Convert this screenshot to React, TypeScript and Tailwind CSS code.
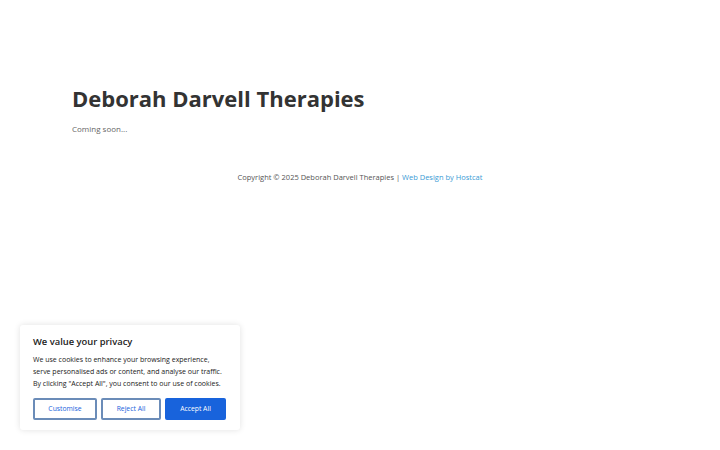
const FONT = "font-['Open_Sans',sans-serif]";

function CookieBanner() {
  return (
    <div className="absolute left-[20px] top-[325px] w-[220px] rounded-[3px] bg-white px-[13px] pb-[10px] pt-[10px] shadow-[0_0_6px_rgba(0,0,0,0.12)]">
      <p className="text-[9.4px] font-semibold leading-[14px] text-[#212121]">
        We value your privacy
      </p>
      <p className="mt-[5px] whitespace-nowrap text-[7px] leading-[12px] text-[#212121]">
        We use cookies to enhance your browsing experience,
        <br />
        serve personalised ads or content, and analyse our traffic.
        <br />
        By clicking "Accept All", you consent to our use of cookies.
      </p>
      <div className="mt-[8px] flex gap-[4px]">
        <button className="h-[22px] w-[64px] rounded-[2px] border-2 border-[#6b8cb8] text-[6.8px] text-[#1863dc]">
          Customise
        </button>
        <button className="h-[22px] w-[60px] rounded-[2px] border-2 border-[#6b8cb8] text-[6.8px] text-[#1863dc]">
          Reject All
        </button>
        <button className="h-[22px] w-[61px] rounded-[2px] border-2 border-[#1863dc] bg-[#1863dc] text-[6.8px] text-white">
          Accept All
        </button>
      </div>
    </div>
  );
}

export default function App() {
  return (
    <div className={`relative h-[450px] w-[720px] bg-white ${FONT}`}>
      <main className="px-[72px] pt-[82px]">
        <h1 className="text-[22px] font-bold leading-[32px] text-[#333333]">
          Deborah Darvell Therapies
        </h1>
        <p className="mt-[8px] text-[8px] leading-[14px] text-[#666666]">
          Coming soon...
        </p>
      </main>
      <footer className="mt-[34px] text-center text-[7.5px] leading-[14px] text-[#555555]">
        Copyright © 2025 Deborah Darvell Therapies |{" "}
        <a className="text-[#3a9bd5]">Web Design by Hostcat</a>
      </footer>
      <CookieBanner />
    </div>
  );
}
